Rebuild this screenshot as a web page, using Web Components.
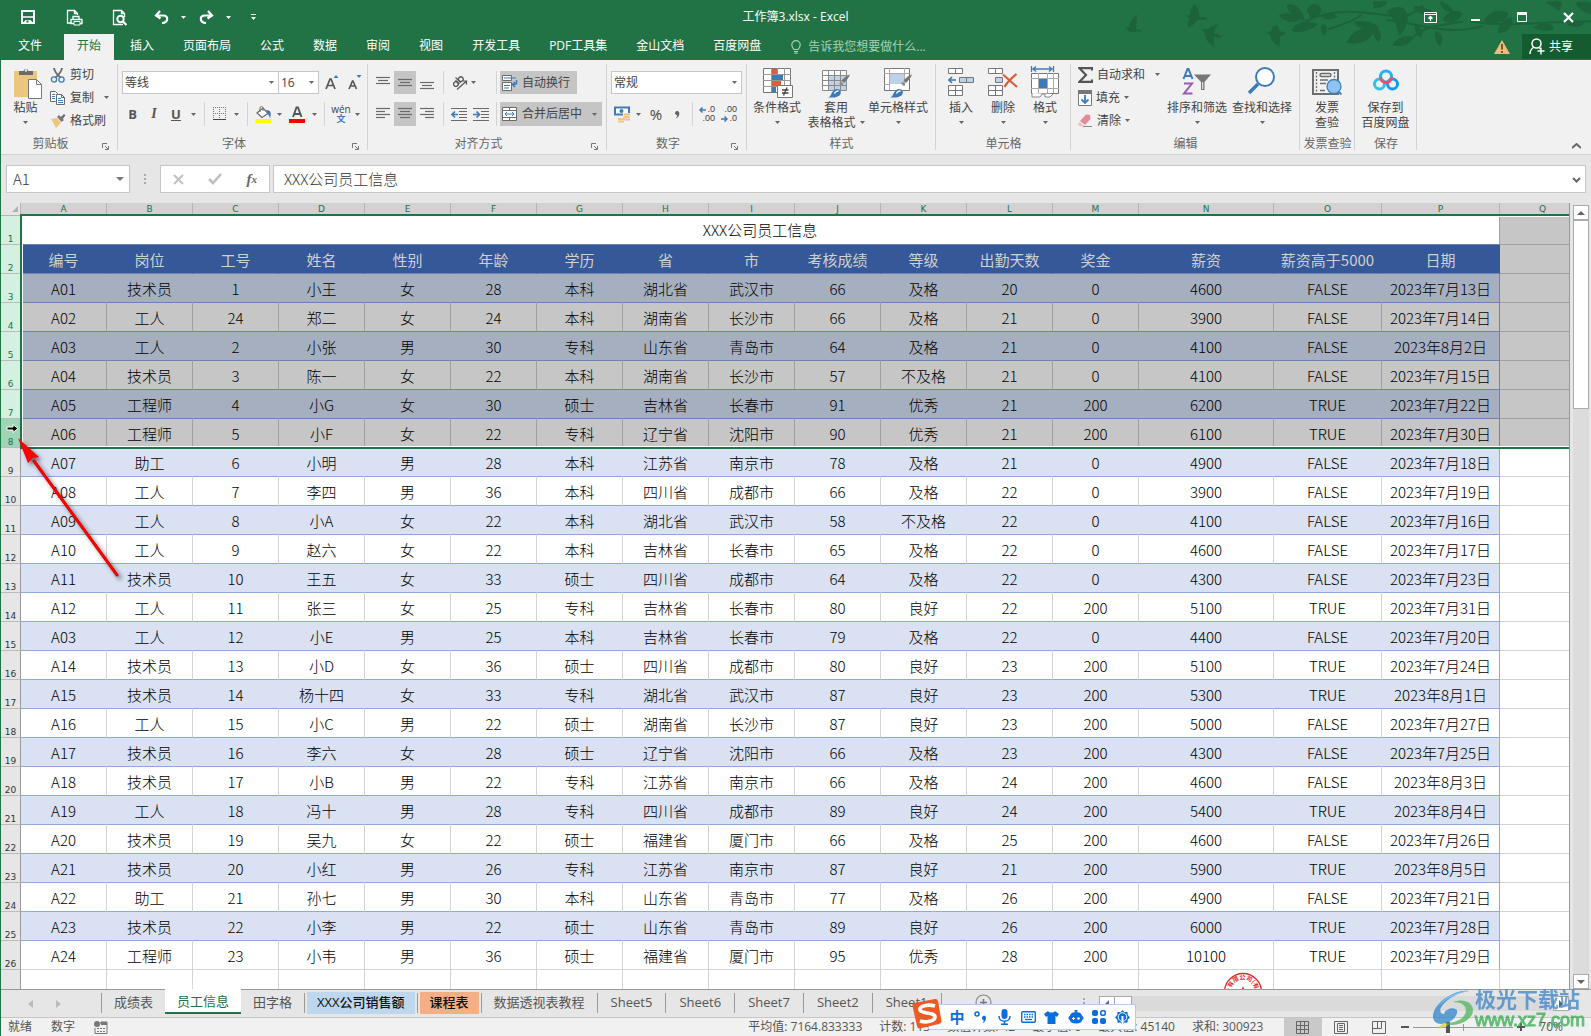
<!DOCTYPE html>
<html lang="zh-CN">
<head>
<meta charset="utf-8">
<title>工作簿3.xlsx - Excel</title>
<style>
html,body{margin:0;height:100%}
body{font:12px/16px "Open Sans","Noto Sans CJK SC",sans-serif;color:#444;overflow:hidden}
</style>
</head>
<body>
<excel-app></excel-app>
<script>
const RESET = `*{box-sizing:border-box}
button,select,input{font:inherit;color:inherit;margin:0;padding:0;border:0;background:none;border-radius:0;outline:0}
select{appearance:none}`;

/* ---------- icons ---------- */
const s = (w, h, body, extra = '') => `<svg width="${w}" height="${h}" viewBox="0 0 ${w} ${h}" fill="none" ${extra}>${body}</svg>`;
const lines = (w, rows) => s(14, 14, rows.map(([x, y, l]) => `<path d="M${x} ${y}.5h${l}"/>`).join(''), 'stroke="#6a6a6a" stroke-width="1.2"');
const brush = `<path d="M30 8.500c-1 3-3.500 6-6 8.500l-2.500-2.500c2-2.500 5-5 8.500-6z" fill="#777"/><path d="M21 15.500l2.500 2.500-2 2-2.500-2.500z" fill="#8d8d8d"/><path d="M8 31.500c2-.5 2.500-2 3.500-4 1.500-3 4-5 6.500-4.500 2.500.7 3.500 3 2.500 5-1.500 3-6.500 4-12.500 3.500z" fill="#3f7ab8"/><path d="M14.500 27.500c1-2 3-3 4-2" stroke="#fff" stroke-width="1.500"/>`;
const ICONS = {
  caret: s(5, 3, '<path d="M0 0h5L2.500 3z" fill="currentColor"/>'),
  caretl: s(8, 4, '<path d="M0 0h8L4 4z" fill="currentColor"/>'),
  save: s(16, 16, '<path d="M2 2h12v12H2z" stroke="#fff" stroke-width="2"/><path d="M3 8h10M4 13h8" stroke="#fff" stroke-width="1.500"/><path d="M5 11h6v3H5z" fill="#fff"/><path d="M6.500 11.500h2v2h-2z" fill="#217346"/>'),
  print: s(17, 17, '<path d="M6 14H1.500V1.500h7l3 3V6M8.500 1.500v3h3" stroke="#fff" stroke-width="1.300"/><path d="M7 7.500h6v3H7zM5 10.500h11v4H5z" stroke="#fff" stroke-width="1.300"/><path d="M8 12.500h6v3.500H8z" fill="#217346" stroke="#fff"/>'),
  preview: s(16, 17, '<path d="M11 15.500H1.500V1.500h8l3 3V8M9.500 1.500v3h3" stroke="#fff" stroke-width="1.300"/><circle cx="8.500" cy="10" r="3.200" stroke="#fff" stroke-width="2"/><path d="M11 12.500l3.500 3.500" stroke="#fff" stroke-width="2.200"/>'),
  undo: s(16, 15, '<path d="M6 1L2 5.500l4.500 3M3 5.500h6c6 0 5.500 7-1 7.500" stroke="#fff" stroke-width="2.200"/>'),
  redo: s(16, 15, '<path d="M10 1l4 4.500-4.500 3M13 5.500H7c-6 0-5.500 7 1 7.500" stroke="#fff" stroke-width="2.200"/>'),
  custom: s(5, 7, '<path d="M0 .5h5" stroke="#fff"/><path d="M0 3h5L2.500 6z" fill="#fff"/>'),
  ribbonopt: s(13, 11, '<path d="M.5.5h12v10H.5zM.5 2.500h12" stroke="#fff"/><path d="M6.500 9V5M4.500 6.500l2-2 2 2" stroke="#fff" stroke-width="1.300"/>'),
  min: s(10, 11, '<path d="M0 8h9" stroke="#fff" stroke-width="2"/>'),
  max: s(11, 11, '<path d="M.5.5h9v9H.5z" stroke="#fff"/><path d="M0 1.500h10" stroke="#fff" stroke-width="3"/>'),
  close: s(11, 11, '<path d="M1 1l9 9M10 1l-9 9" stroke="#fff" stroke-width="2.200"/>'),
  bulb: s(10, 14, '<path d="M3 9.500C1.500 8 .8 7 .8 4.800a4.200 4.200 0 018.400 0C9.200 7 8.500 8 7 9.500zM3 11.500h4M3.500 13.200h3" stroke="#a5d1b5" stroke-width="1.200"/>'),
  warn: s(16, 14, '<path d="M8 0l8 14H0z" fill="#e9bd7b"/><path d="M8 4v5.500M8 11v2" stroke="#5b4220" stroke-width="1.600"/>'),
  person: s(16, 17, '<circle cx="7.500" cy="5.500" r="4.500" stroke="#fff" stroke-width="1.500"/><path d="M1 16c0-3.500 1.500-5.500 4-7M10 9.500l1.500 1.500M12 9.500v7M8.500 13h7" stroke="#fff" stroke-width="1.400"/>'),
  paste: s(32, 34, '<path d="M4 5h23v26H4z" fill="#ebc67f"/><path d="M9 9V5h4.500a2.600 2.600 0 015 0H23v4z" fill="#6b6b6b"/><circle cx="16" cy="4.500" r="1.200" fill="#f1f1f1"/><path d="M18.500 13.500h8l5 5v14h-13z" fill="#fff" stroke="#777"/><path d="M26.500 13.500v5h5" stroke="#777"/>'),
  cut: s(16, 16, '<path d="M4 1c.5 4 3 6.500 6.500 9.500M12 1c-.5 4-3 6.500-6.500 9.500" stroke="#6a6a6a" stroke-width="1.900"/><circle cx="4" cy="12.500" r="2.600" stroke="#3f7ab8" stroke-width="1.300"/><circle cx="11.500" cy="12.500" r="2.600" stroke="#3f7ab8" stroke-width="1.300"/>'),
  copy: s(16, 16, '<path d="M5.500 11.500h-5v-10h5l2 2v2" fill="#fff" stroke="#6a6a6a"/><path d="M6.500 4.500h5l3 3v7h-8z" fill="#fff" stroke="#6a6a6a"/><path d="M11.500 4.500v3h3" stroke="#6a6a6a"/><path d="M8 8.500h3M8 10.500h5M8 12.500h5M2 4.500h3M2 6.500h3M2 8.500h3" stroke="#3f7ab8"/>'),
  painter: s(16, 15, '<path d="M1 6l6-1 4 5-5 5z" fill="#ebc67f"/><path d="M7 4l2-2 5 5-2.500 2z" fill="#777"/><path d="M10.500 4.500L14 1l1.500 1.500-3 3.500z" fill="#6a6a6a"/>'),
  launcher: s(7, 7, '<path d="M.5 5V.5H5M3 3l3 3M6.500 3v3.500H3" stroke="#777"/>'),
  grow: s(14, 15, '<path d="M1 14L5 4h1l4 10M2.500 10.500h6" stroke="#555" stroke-width="1.700"/><path d="M8.500 3l2.500-3 2.500 3z" fill="#3f7ab8"/>'),
  shrink: s(14, 15, '<path d="M1 14l3.500-8h.5l3.500 8M2.500 11h5" stroke="#555" stroke-width="1.600"/><path d="M8.500 0l2.500 3 2.500-3z" fill="#3f7ab8"/>'),
  borders: s(14, 14, '<path d="M.5 0v14M6.500 0v14M12.500 0v14M0 .5h13M0 6.500h13" stroke="#777" stroke-dasharray="1 1"/><path d="M0 12.500h13" stroke="#444"/>'),
  fill: s(17, 17, '<path d="M2 7l6-5 5 5.500-6 4z" fill="#fff" stroke="#6a6a6a" stroke-width="1.200"/><path d="M5 6V2c0-2 3-2 3 0v3" stroke="#6a6a6a"/><path d="M11 4c5 0 5.500 3 4 8l-2-4z" fill="#3f7ab8"/><path d="M0 13h16v4H0z" fill="#ff0"/>'),
  fontcolor: s(17, 17, '<path d="M4 11L7.500 1.500h1.500L12.500 11M5.500 8H11" stroke="#555" stroke-width="1.900"/><path d="M0 13h16v4H0z" fill="red"/>'),
  orient: s(17, 16, '<g transform="rotate(-45 7 7)" stroke="#555" stroke-width="1.300"><circle cx="4" cy="7" r="2.300"/><path d="M6.500 4v5.500M8.500 2v7.500"/><circle cx="11" cy="7" r="2.300"/></g><path d="M6 14.500l9-8M12 6h3.500v3.500" stroke="#555" stroke-width="1.200"/>'),
  top: lines(14, [[0, 1, 14], [2, 4, 10], [0, 7, 14]]),
  mid: lines(14, [[0, 3, 14], [2, 6, 10], [0, 9, 14]]),
  bot: lines(14, [[0, 6, 14], [2, 9, 10], [0, 12, 14]]),
  left: lines(14, [[0, 1, 14], [0, 4, 9], [0, 7, 14], [0, 10, 9]]),
  center: lines(14, [[0, 1, 14], [2, 4, 10], [0, 7, 14], [2, 10, 10]]),
  right: lines(14, [[0, 1, 14], [5, 4, 9], [0, 7, 14], [5, 10, 9]]),
  outdent: s(17, 13, '<path d="M0 .5h16M8 3.500h8M8 6.500h8M8 9.500h8M0 12.500h16" stroke="#6a6a6a"/><path d="M7 6.500H1M4 3.500l-3 3 3 3" stroke="#3f7ab8" stroke-width="1.700"/>'),
  indent: s(17, 13, '<path d="M0 .5h16M8 3.500h8M8 6.500h8M8 9.500h8M0 12.500h16" stroke="#6a6a6a"/><path d="M0 6.500h6M3.500 3.500l3 3-3 3" stroke="#3f7ab8" stroke-width="1.700"/>'),
  wrap: s(16, 16, '<path d="M.5.5h9v5h-9zM.5 7.500h9v8h-9z" fill="#fff" stroke="#6a6a6a"/><path d="M2 3h12M2 10.500h6M2 13h5" stroke="#3f7ab8"/><path d="M14.500 5v3c0 1-1 1.500-3 1.500M13 7l-2.500 2.500L13 12" stroke="#3f7ab8" stroke-width="1.500"/>'),
  merge: s(16, 15, '<path d="M.5.5h14v13H.5zM.5 3.500h14M.5 10.500h14M7.500.5v3M7.500 10.500v3" fill="#fff" stroke="#6a6a6a"/><path d="M3 7h9M5 5L3 7l2 2M10 5l2 2-2 2" stroke="#3f7ab8"/>'),
  money: s(17, 17, '<path d="M1 1.500h14v7H1z" fill="#fff" stroke="#3f7ab8" stroke-width="2"/><circle cx="7.500" cy="5" r="2" fill="#3f7ab8"/><path d="M9 7h7v9h-4v1H4v-5h5z" fill="#f1f1f1"/><path d="M10 8.500h6M9.500 11h6M10 13.500h6M4 13h6M4 15.500h6" stroke="#ebc67f" stroke-width="1.800"/>'),
  arrl: s(7, 6, '<path d="M7 3H1M3.500.5L1 3l2.500 2.500" stroke="#3f7ab8" stroke-width="1.500"/>'),
  arrr: s(7, 6, '<path d="M0 3h6M3.500.5L6 3 3.500 5.500" stroke="#3f7ab8" stroke-width="1.500"/>'),
  comma: s(6, 9, '<path d="M1 3a2.200 2.200 0 014-1c1 3-.5 5.500-3.500 6.500C3 7 3.300 6 3 5 2 5 1 4.500 1 3z" fill="#666"/>'),
  cond: s(32, 32, '<path d="M2.500 2.500h27v24h-27z" fill="#fff" stroke="#777"/><path d="M2 8.500h28M2 14.500h28M2 20.500h28M10.500 2v24M16.500 2v24M23.500 2v24" stroke="#999"/><path d="M11 3h5v5h-5zM11 15h9v5h-9z" fill="#d9603f"/><path d="M11 9h11v5H11zM11 21h4v5h-4z" fill="#3f7ab8"/><path d="M16.500 19.500h15v12h-15z" fill="#fff" stroke="#777"/><path d="M21 24h6.500M21 27h6.500M26 21.500l-3.500 8" stroke="#444" stroke-width="1.300"/>'),
  tablefmt: s(32, 32, '<path d="M2.500 4.500h24v20h-24z" fill="#fff"/><path d="M8 10h18v14H8z" fill="#bdd1e8"/><path d="M2.500 4.500h24v20h-24zM2 9.500h24M2 14.500h24M2 19.500h24M8.500 4v20M14.500 4v20M20.500 4v20" stroke="#8a8a8a"/>' + brush),
  cellstyle: s(32, 32, '<path d="M2.500 2.500h25v22h-25z" fill="#fff" stroke="#777"/><path d="M2 7.500h25M2 18.500h6M7.500 2v22M22.500 2v18" stroke="#aaa"/><path d="M8 8h14v10H8z" fill="#bdd1e8"/>' + brush),
  insert: s(28, 30, '<path d="M1.500 2.500h14v5h-14zM8.500 2.500v5M1.500 19.500h14v10h-14zM8.500 19.500v10M1.500 24.500h14" fill="#fff" stroke="#777"/><path d="M12.500 11.500h14v5h-14zM19.500 11.500v5" fill="#bdd1e8" stroke="#777"/><path d="M9 14H2M5 11l-3 3 3 3" stroke="#3f7ab8" stroke-width="1.700"/>'),
  del: s(32, 30, '<path d="M1.500 2.500h14v5h-14zM8.500 2.500v5M1.500 19.500h14v10h-14zM8.500 19.500v10M1.500 24.500h14" fill="#fff" stroke="#777"/><path d="M8.500 11.500h7v5h-7z" fill="#bdd1e8" stroke="#777"/><path d="M16 8.500L30 21M29.500 8C25 12 20 16 17.500 21" stroke="#dc5b3c" stroke-width="2.200"/>'),
  format: s(30, 32, '<path d="M1.500 0v6M23.500 0v6M3 3h19M6 .5L3 3l3 2.500M19 .5L22 3l-3 2.500" stroke="#3f7ab8" stroke-width="1.300"/><path d="M1.500 7.500h27v20h-27z" fill="#fff" stroke="#777"/><path d="M1 12.500h28M1 22.500h28M8.500 7v20M17.500 7v20M23.500 7v20" stroke="#aaa"/><path d="M9 13h8v9H9z" fill="#3f7ab8"/><path d="M2 27v4h8l2-3h3v3h5l3-3" fill="#fff" stroke="#888"/>'),
  sigma: s(15, 16, '<path d="M14 3.500V1.200H1.500L8 8l-6.500 6.800H14v-2.300" stroke="#555" stroke-width="2.200"/>'),
  filldown: s(14, 16, '<path d="M.5.5h13v15H.5z" fill="#fff" stroke="#777"/><path d="M0 0h14v4H0z" fill="#777"/><path d="M7 5v8M3.500 9.500L7 13l3.500-3.500" stroke="#3f7ab8" stroke-width="1.800"/>'),
  eraser: s(15, 14, '<path d="M2 7l6-6.500L12 1l.5 4L7 11z" fill="#e58a9b"/><path d="M1.500 8L6 12l-3 .5L0 11z" fill="#f3bcc6"/><path d="M5 12.500h9" stroke="#888"/>'),
  sort: s(32, 32, '<path d="M2.500 13L6.500 3h1l4 10M4 10h6.500" stroke="#3f7ab8" stroke-width="2"/><path d="M3 17.500h8L3 27.500h8.500" stroke="#9a5bb8" stroke-width="2"/><path d="M13 8.500h17l-6.500 7.500v8h-3.500v-8z" fill="#777"/><path d="M21.700 16v7" stroke="#f1f1f1"/>'),
  find: s(32, 32, '<circle cx="19" cy="11" r="9" fill="#fff" stroke="#3f7ab8" stroke-width="2"/><path d="M12 18L3 27" stroke="#3f7ab8" stroke-width="3.600"/>'),
  invoice: s(32, 32, '<path d="M2 4h25v24H2z" fill="#f1f1f1" stroke="#6e6e6e" stroke-width="2"/><path d="M5.500 6v20M23.500 6v12" stroke="#6e6e6e" stroke-dasharray="2 1.500" stroke-width="1.300"/><rect x="9" y="7.500" width="11" height="3" rx="1.500" stroke="#6e6e6e" stroke-width="1.400"/><path d="M9 14h8M9 17.500h6M9 24.500h5" stroke="#6e6e6e" stroke-width="1.300"/><circle cx="23" cy="20.500" r="7" fill="#8ec2f3" stroke="#4182b4" stroke-width="1.300"/><path d="M27.500 25.500l3 3" stroke="#4182b4" stroke-width="1.800"/>'),
  pan: s(28, 32, '<circle cx="7.500" cy="18" r="5" stroke="#2fc0f5" stroke-width="3"/><circle cx="20.500" cy="18" r="5" stroke="#0c9df2" stroke-width="3"/><circle cx="14" cy="10.500" r="5.500" stroke="#2aaefb" stroke-width="3"/><path d="M8.500 11a5.500 5.500 0 0011 0" stroke="#f0506b" stroke-width="3"/>'),
  up: s(9, 6, '<path d="M0 5l4.500-4L9 5" stroke="#666" stroke-width="2"/>'),
  down: s(9, 6, '<path d="M1 1l3.500 3.500L8 1" stroke="#666" stroke-width="2"/>'),
  cancel: s(11, 11, '<path d="M1 1l9 9M10 1l-9 9" stroke="#c0c0c0" stroke-width="2"/>'),
  ok: s(14, 12, '<path d="M1 6l4 4 8-9" stroke="#c0c0c0" stroke-width="2.600"/>'),
  stat: s(14, 13, '<circle cx="3" cy="3" r="3" fill="#777"/><path d="M7 1h6v11.500H1V7" stroke="#777"/><path d="M6 1h7v3H7z" fill="#777"/><path d="M3 7.500h9M3 10.500h9" stroke="#777" stroke-dasharray="2 1"/>'),
  vnormal: s(14, 13, '<path d="M.5.5h12v12H.5zM.5 4.500h12M.5 8.500h12M4.500.5v12M8.500.5v12" stroke="#666"/>'),
  vlayout: s(14, 13, '<path d="M.5.5h13v12H.5zM3.500 2.500h7v8h-7zM5 4.500h4M5 6.500h4M5 8.500h4" stroke="#666"/>'),
  vbreak: s(15, 13, '<path d="M.5.5h13v12H.5zM5.500.5v7M9.500.5v7M.5 7.500h9" stroke="#666"/>'),
  plus: s(17, 17, '<circle cx="8.500" cy="8.500" r="7.500" stroke="#888" stroke-width="1.200"/><path d="M8.500 5v7M5 8.500h7" stroke="#777" stroke-width="1.500"/>'),
  cursor: s(13, 9, '<path d="M1 3h6V.5L12 4.500 7 8.500V6H1z" fill="#000" stroke="#fff"/>'),
  sogou: s(32, 32, '<path d="M3 5Q1 5.500 1.500 8L6 28q.5 3 3 2.500L28 26q3-1 2.500-3L27 3q-.5-2.500-3-2z" fill="#ee5a24"/><path d="M24 8C17 6 8 8 9 12c1 4 15 2 15 7 0 4-9 6-15 4" stroke="#fff" stroke-width="3.600"/>'),
  punct: s(14, 14, '<circle cx="3" cy="4" r="2" stroke="#0a6fdc" stroke-width="1.500"/><path d="M8.500 6.500a2 2 0 013.500 1c0 3-1 4.500-3.500 5.500 1-1.500 1.300-2 1-3-1.500-.5-2-2-1-3.500z" fill="#0a6fdc"/>'),
  mic: s(13, 16, '<rect x="3.500" y="0" width="6" height="10" rx="3" fill="#0a6fdc"/><path d="M1 7c0 7 11 7 11 0M6.500 12v3M3 15.200h7" stroke="#0a6fdc" stroke-width="1.500"/>'),
  keyb: s(15, 12, '<rect x=".7" y=".7" width="13.600" height="10.600" rx="1" stroke="#0a6fdc" stroke-width="1.400"/><path d="M3 3.500h9M3 6h9" stroke="#0a6fdc" stroke-width="1.300" stroke-dasharray="1.500 1"/><path d="M4 8.500h7" stroke="#0a6fdc" stroke-width="1.300"/>'),
  shirt: s(15, 13, '<path d="M4 0c1.500 2 5.500 2 7 0l4 3-2 3-1.500-1v8h-8V5L2 6 0 3z" fill="#0a6fdc"/>'),
  robot: s(16, 14, '<path d="M8 3V0M6.500.7h3" stroke="#0a6fdc" stroke-width="1.500"/><path d="M8 2c5 0 6 3 6 4 2 0 2 4 0 4 0 2-2 3.500-6 3.500S2 12 2 10C0 10 0 6 2 6c0-1 1-4 6-4z" fill="#0a6fdc"/><path d="M4 8.500h3M5.500 7v3" stroke="#fff" stroke-width="1.200"/><circle cx="10.500" cy="8.500" r="1.300" fill="#fff"/>'),
  apps: s(14, 14, '<rect width="6" height="6" rx="2" fill="#0a6fdc"/><rect x="8.700" y=".7" width="4.600" height="4.600" rx="2" stroke="#0a6fdc" stroke-width="1.600"/><rect y="8" width="6" height="6" rx="2" fill="#0a6fdc"/><rect x="8" y="8" width="6" height="6" rx="2" fill="#0a6fdc"/>'),
  gear: s(15, 15, '<path d="M7.500 0l2 2.300 3-.5.2 3L15 7.500l-2.300 2.200-.2 3-3-.3-2 2.600-2-2.600-3 .3-.2-3L0 7.500l2.300-2.700.2-3 3 .5z" fill="#0a6fdc"/><circle cx="7.500" cy="7" r="4.300" stroke="#fff"/><path d="M7.500 6v9" stroke="#fff" stroke-width="2"/>')
};

function define(name, css, html) {
  customElements.define(name, class extends HTMLElement {
    constructor() { super(); this.attachShadow({ mode: 'open' }); }
    connectedCallback() {
      const body = typeof html === 'function' ? html(this) : html;
      this.shadowRoot.innerHTML = `<style>${RESET}${css}</style>${body}`;
    }
  });
}
const icon = n => `<x-icon name="${n}"></x-icon>`;
const caret = icon('caret');

define('x-icon', ':host{display:inline-flex;flex:none}svg{display:block}', el => ICONS[el.getAttribute('name')]);

/* ---------- title bar ---------- */
define('title-bar', `
:host{display:block;position:relative;background:#217346;color:#fff;height:60px;flex:none}
.art{position:absolute;right:0;top:0;pointer-events:none}
.row{position:relative;display:grid;grid-template-columns:1fr auto 1fr;height:34px;align-items:center}
.qat,.win{display:flex;align-items:center}
.win{justify-content:flex-end}
button{display:flex;align-items:center;justify-content:center;width:var(--w);height:32px}
.qat{padding-left:5px}
.tabs{position:relative;display:flex;height:26px;align-items:stretch}
.tabs a{color:#fff;text-decoration:none;padding:0 13px;line-height:23px;margin-right:3px}
.tabs a.file{padding:0 22px 0 18px;margin:0}
.tabs a.on{background:#f1f1f1;color:#217346}
.tell{display:flex;align-items:center;gap:7px;color:#a5d1b5;margin-left:14px}
.tell input{width:150px}.tell input::placeholder{color:#a5d1b5;opacity:1}
.sp{flex:1}
.warn{width:auto;height:auto;margin-right:12px}
.share{background:#125c30;width:69px;height:25px;gap:4px;justify-content:flex-start;padding-left:7px}
`, `
<svg class="art" width="471" height="60" viewBox="0 0 1413 180" fill="#1c633b">
<path d="M52 44c-10 4-24 18-24 40l-14-4c6 14 20 20 38 14l12 4-2-8-14-2c2-14 2-30 4-44z"/>
<path d="M224 12c-8 6-14 18-14 32l-14 4 12 6c-4 12-6 20-4 30 12-6 22-14 28-24l30 0-6-8-18 0c2-16-4-30-14-40z"/>
<path d="M298 72c-16 2-26 6-34 16l-18 0 8 12c0 18 12 30 30 40-2-12-4-20-2-30l22 4-6-10-16-4c2-12 8-20 16-28z"/>
<path d="M468 74c-10 4-14 10-14 20l-16 2 14 12c2 14 10 24 26 32 0-12 2-20 2-30l16-8-2-6-16-2c0-8-4-16-10-20z"/>
<path d="M476 46c24-14 48-4 64 18-24 6-52 0-64-18zM500 14c28-8 52 20 54 50-28-10-50-24-54-50zM514 92c14-30 50-34 80-20-20 18-50 30-80 20zM560 30c10-22 30-22 42-8 8 16-10 30-30 32zM604 74c18-4 22 16 10 34-12-8-14-22-10-34zM600 48c18-14 40-12 52 2-16 12-38 10-52-2z"/>
<path d="M556 64C640 24 720 34 800 46c60 12 70 0 110-30M724 44c-20 20-60 30-100 44M800 60c100 10 180 50 290 18M880 110c50-40 80-30 150-46M1050 64c100 20 200 0 363 0" fill="none" stroke="#1c633b" stroke-width="6"/>
<path d="M680 128c16-38 50-50 86-40-14 34-44 50-86 40zM700 66c30-8 66 0 78 20-34 8-66 0-78-20zM762 82c24 8 26 28 14 44-16-12-20-28-14-44zM760 4h44c-8 18-36 26-44 18zM800 36c30-28 60-14 62 10 6 24-12 48-22 62-14-26-6-44-40-72z"/>
<path d="M816 136c14-24 42-34 66-24-12 22-36 32-66 24zM886 74c18 6 24 20 18 38-16-8-22-20-18-38zM948 92c24 12 24 32 12 46-14-12-18-32-12-46zM968 60c14-28 40-32 58-22 0 18-30 40-58 22zM940 34c-20-10-40-18-60-14 10 22 36 28 60 14zM960 4c20 4 40 20 40 34-24-2-40-16-40-34z"/>
<path d="M1090 62c20-28 50-40 74-22 0 28-46 36-74 22zM1134 100c0-24 10-40 40-48 10 20-8 48-40 48zM1240 84c14-18 50-16 60-6 8 12-12 24-60 6zM1276 6l40 26c14-20 10-28-2-30zM1366 8c14-6 34-4 47 0v34c-24-6-40-18-47-34zM1340 74c16 8 44 10 52-4-12-10-36-12-52 4z"/>
</svg>
<div class="row">
 <div class="qat">
  <button style="--w:46px" aria-label="保存">${icon('save')}</button><button style="--w:46px" aria-label="打印">${icon('print')}</button><button style="--w:46px" aria-label="预览">${icon('preview')}</button>
  <button style="--w:38px" aria-label="撤销">${icon('undo')}</button><button style="--w:4px" aria-label="撤销列表">${caret}</button>
  <button style="--w:42px" aria-label="恢复">${icon('redo')}</button><button style="--w:2px" aria-label="恢复列表">${caret}</button><button style="--w:48px" aria-label="自定义">${icon('custom')}</button>
 </div>
 <div>工作簿3.xlsx - Excel</div>
 <div class="win"><button style="--w:46px" aria-label="功能区">${icon('ribbonopt')}</button><button style="--w:46px" aria-label="最小化">${icon('min')}</button><button style="--w:46px" aria-label="最大化">${icon('max')}</button><button style="--w:46px" aria-label="关闭">${icon('close')}</button></div>
</div>
<div class="tabs">
 <a class="file" href="#">文件</a><a class="on" href="#">开始</a>${['插入', '页面布局', '公式', '数据', '审阅', '视图', '开发工具', 'PDF工具集', '金山文档', '百度网盘'].map(t => `<a href="#">${t}</a>`).join('')}
 <label class="tell">${icon('bulb')}<input placeholder="告诉我您想要做什么..."></label>
 <span class="sp"></span>
 <button class="warn" aria-label="警告">${icon('warn')}</button><button class="share">${icon('person')}<span>共享</span></button>
</div>`);

/* ---------- ribbon ---------- */
define('ribbon-group', `
:host{display:flex;flex-direction:column;flex:none;width:var(--w);height:94px;position:relative}
:host::after{content:"";position:absolute;right:0;top:4px;bottom:4px;width:1px;background:#d2d2d2}
.body{height:76px;display:flex}
.foot{display:flex;height:16px;line-height:16px;color:#666;white-space:nowrap}
.foot span{flex:1;display:flex;justify-content:center;min-width:0}
button{display:flex;align-items:flex-end;justify-content:flex-start;height:14px;width:18px;padding-left:2px}
`, el => `<div class="body"><slot></slot></div><div class="foot"><span>${el.getAttribute('label')}</span>${el.hasAttribute('launcher') ? `<button style="width:12px;padding:0" aria-label="对话框">${icon('launcher')}</button>` : ''}</div>`.replace('width:12px;padding:0', ''));

define('big-button', `
:host{display:block;width:var(--w);flex:none}
button{display:flex;flex-direction:column;align-items:center;width:100%;height:76px;padding-top:6px;white-space:nowrap}
.i{height:34px;display:flex;align-items:flex-start;justify-content:center}
.t{height:15px;line-height:15px}
.c{height:14px;display:flex;align-items:center;color:#666}
.l{display:flex;align-items:center;gap:4px;height:15px}.l x-icon{color:#666}
`, el => {
  const [a, b] = el.getAttribute('label').split('|'), arrow = el.hasAttribute('arrow');
  return `<button><span class="i">${icon(el.getAttribute('icon'))}</span><span class="t">${a}</span>${b ? `<span class="l">${b}${arrow ? caret : ''}</span>` : arrow ? `<span class="c">${caret}</span>` : ''}</button>`;
});

const cell = (w, n, cls = '') => `<button class="${cls}" style="width:${w}px" aria-label="${n}">${icon(n)}</button>`;
const sep = w => `<i style="width:${w}px"></i>`;
define('ribbon-bar', `
:host{display:flex;flex:none;height:95px;background:#f1f1f1;border-bottom:1px solid #d2d2d2}
button{display:inline-flex;align-items:center;justify-content:center;flex:none;height:100%;white-space:nowrap}
x-icon[name=caret]{color:#666}
.stack{display:flex;flex-direction:column;padding-top:3px}
.stack button{height:23px;gap:4px;justify-content:flex-start}
.far{margin-left:6px;display:flex}
.rows{display:flex;flex-direction:column;gap:8px;padding:11px 0 0 4px}
.row{display:flex;height:24px}
.row:first-child{height:23px}
.row i{display:flex;justify-content:center}.row i::before{content:"";width:1px;background:#d2d2d2}
.on{background:#c5c5c5}
.dd{display:grid;background:#fff;border:1px solid #c6c6c6;width:var(--w)}
.dd+.dd{border-left:0}
.dd select,.dd x-icon{grid-area:1/1}
.dd select{padding-left:2px;color:#444;width:100%}
.dd x-icon{justify-self:end;align-self:center;margin-right:4px;pointer-events:none}
.wide{gap:4px;justify-content:flex-start;padding-left:2px}
b,em,u{font:bold 13px "Open Sans";color:#555}em{font:italic bold 14px "Liberation Serif"}
.wen{flex-direction:column;font-size:10px;line-height:10px}.wen span:last-child{color:#3f7ab8;font:bold 9px/10px "Noto Sans CJK SC"}
.pct{font-size:15px}
.dec{flex-direction:column;align-items:flex-end;padding-right:4px;font:9px/9px "Liberation Sans"}.dec span{display:flex;align-items:center;gap:1px}
.end{flex:1;display:flex;justify-content:flex-end;align-items:flex-end;padding:0 10px 4px}.end button{height:8px}
`, `
<ribbon-group label="剪贴板" launcher style="--w:117px">
 <big-button icon="paste" label="粘贴" arrow style="--w:49px"></big-button>
 <div class="stack"><button>${icon('cut')}剪切</button><button>${icon('copy')}复制<span class="far">${caret}</span></button><button>${icon('painter')}格式刷</button></div>
</ribbon-group>
<ribbon-group label="字体" launcher style="--w:250px"><div class="rows">
 <div class="row"><span class="dd" style="--w:157px"><select aria-label="字体"><option>等线</option></select>${caret}</span><span class="dd" style="--w:40px"><select aria-label="字号"><option>16</option></select>${caret}</span>${cell(25, 'grow')}${cell(22, 'shrink')}</div>
 <div class="row"><button style="width:21px"><b>B</b></button><button style="width:22px"><em>I</em></button><button style="width:22px"><u>U</u></button>${cell(13, 'caret')}${sep(8)}${cell(23, 'borders')}${cell(11, 'caret')}${sep(10)}${cell(22, 'fill')}${cell(10, 'caret')}${cell(26, 'fontcolor')}${cell(8, 'caret')}${sep(12)}<button class="wen" style="width:22px"><span>wén</span><span>文</span></button>${cell(10, 'caret')}</div>
</div></ribbon-group>
<ribbon-group label="对齐方式" launcher style="--w:239px"><div class="rows">
 <div class="row">${cell(22, 'top')}${cell(22, 'mid', 'on')}${cell(22, 'bot')}${sep(10)}${cell(22, 'orient')}${cell(6, 'caret')}<span style="width:16px"></span>${sep(8)}<button class="on wide" style="width:77px">${icon('wrap')}自动换行</button></div>
 <div class="row">${cell(22, 'left')}${cell(22, 'center', 'on')}${cell(22, 'right')}${sep(10)}${cell(22, 'outdent')}${cell(22, 'indent')}${sep(8)}<button class="on wide" style="width:102px">${icon('merge')}合并后居中<span class="far">${caret}</span></button></div>
</div></ribbon-group>
<ribbon-group label="数字" launcher style="--w:140px"><div class="rows">
 <div class="row"><span class="dd" style="--w:131px"><select aria-label="数字格式"><option>常规</option></select>${caret}</span></div>
 <div class="row">${cell(22, 'money')}${cell(10, 'caret')}<button class="pct" style="width:26px">%</button>${cell(16, 'comma')}${sep(14)}<button class="dec" style="width:20px"><span>${icon('arrl')}.0</span><span>.00</span></button><button class="dec" style="width:22px"><span>.00</span><span>${icon('arrr')}.0</span></button></div>
</div></ribbon-group>
<ribbon-group label="样式" style="--w:189px">
 <big-button icon="cond" label="条件格式" arrow style="--w:60px"></big-button><big-button icon="tablefmt" label="套用|表格格式" arrow style="--w:58px"></big-button><big-button icon="cellstyle" label="单元格样式" arrow style="--w:66px"></big-button>
</ribbon-group>
<ribbon-group label="单元格" style="--w:135px"><span style="width:4px"></span>
 <big-button icon="insert" label="插入" arrow style="--w:42px"></big-button><big-button icon="del" label="删除" arrow style="--w:42px"></big-button><big-button icon="format" label="格式" arrow style="--w:42px"></big-button>
</ribbon-group>
<ribbon-group label="编辑" style="--w:229px"><span style="width:7px"></span>
 <div class="stack"><button>${icon('sigma')}自动求和<span class="far">${caret}</span></button><button>${icon('filldown')}填充${caret}</button><button>${icon('eraser')}清除${caret}</button></div><span style="flex:1"></span>
 <big-button icon="sort" label="排序和筛选" arrow style="--w:64px"></big-button><big-button icon="find" label="查找和选择" arrow style="--w:66px"></big-button><span style="width:5px"></span>
</ribbon-group>
<ribbon-group label="发票查验" style="--w:55px"><big-button icon="invoice" label="发票|查验" style="--w:54px"></big-button></ribbon-group>
<ribbon-group label="保存" style="--w:62px"><big-button icon="pan" label="保存到|百度网盘" style="--w:61px"></big-button></ribbon-group>
<div class="end"><button aria-label="折叠功能区">${icon('up')}</button></div>`);

/* ---------- formula bar ---------- */
define('formula-bar', `
:host{display:flex;flex:none;height:48px;background:#e6e6e6;padding:10px 5px}
.box{display:flex;align-items:center;background:#fff;border:1px solid #c6c6c6;height:28px}
input{font:300 15px/20px "Noto Sans CJK SC",sans-serif;color:#333;min-width:0;flex:1}
.name{width:124px;padding:0 5px 0 6px}.name x-icon{color:#777}
.dots{width:30px;display:flex;justify-content:center;align-items:center}
.dots::before{content:"";width:2px;height:10px;background:repeating-linear-gradient(#aaa 0 2px,transparent 2px 4px)}
.fx{width:110px;justify-content:space-between;padding:0 12px;margin-right:3px}
.fx button{display:flex}.fx .f{font:italic bold 15px/20px "Liberation Serif";color:#666}.f small{font-size:11px}
.in{flex:1;padding:0 4px 0 10px}
`, `<div class="box name"><input aria-label="名称框" value="A1">${icon('caretl')}</div><span class="dots"></span>
<div class="box fx"><button aria-label="取消">${icon('cancel')}</button><button aria-label="输入">${icon('ok')}</button><button class="f">f<small>x</small></button></div>
<div class="box in"><input aria-label="编辑栏" value="XXX公司员工信息"><button aria-label="展开">${icon('down')}</button></div>`);

/* ---------- worksheet ---------- */
const HEAD = ['编号', '岗位', '工号', '姓名', '性别', '年龄', '学历', '省', '市', '考核成绩', '等级', '出勤天数', '奖金', '薪资', '薪资高于5000', '日期'];
const DATA = `A01,技术员,1,小王,女,28,本科,湖北省,武汉市,66,及格,20,0,4600,FALSE,7月13日
A02,工人,24,郑二,女,24,本科,湖南省,长沙市,66,及格,21,0,3900,FALSE,7月14日
A03,工人,2,小张,男,30,专科,山东省,青岛市,64,及格,21,0,4100,FALSE,8月2日
A04,技术员,3,陈一,女,22,本科,湖南省,长沙市,57,不及格,21,0,4100,FALSE,7月15日
A05,工程师,4,小G,女,30,硕士,吉林省,长春市,91,优秀,21,200,6200,TRUE,7月22日
A06,工程师,5,小F,女,22,专科,辽宁省,沈阳市,90,优秀,21,200,6100,TRUE,7月30日
A07,助工,6,小明,男,28,本科,江苏省,南京市,78,及格,21,0,4900,FALSE,7月18日
A08,工人,7,李四,男,36,本科,四川省,成都市,66,及格,22,0,3900,FALSE,7月19日
A09,工人,8,小A,女,22,本科,湖北省,武汉市,58,不及格,22,0,4100,FALSE,7月16日
A10,工人,9,赵六,女,22,本科,吉林省,长春市,65,及格,22,0,4600,FALSE,7月17日
A11,技术员,10,王五,女,33,硕士,四川省,成都市,64,及格,22,0,4300,FALSE,7月23日
A12,工人,11,张三,女,25,专科,吉林省,长春市,80,良好,22,200,5100,TRUE,7月31日
A03,工人,12,小E,男,25,本科,吉林省,长春市,79,及格,22,0,4400,FALSE,7月20日
A14,技术员,13,小D,女,36,硕士,四川省,成都市,80,良好,23,200,5100,TRUE,7月24日
A15,技术员,14,杨十四,女,33,专科,湖北省,武汉市,87,良好,23,200,5300,TRUE,8月1日
A16,工人,15,小C,男,22,硕士,湖南省,长沙市,87,良好,23,200,5000,FALSE,7月27日
A17,技术员,16,李六,女,28,硕士,辽宁省,沈阳市,66,及格,23,200,4300,FALSE,7月25日
A18,技术员,17,小B,男,22,专科,江苏省,南京市,66,及格,24,200,4600,FALSE,8月3日
A19,工人,18,冯十,男,28,专科,四川省,成都市,89,良好,24,200,5400,TRUE,8月4日
A20,技术员,19,吴九,女,22,硕士,福建省,厦门市,66,及格,25,200,4600,FALSE,7月26日
A21,技术员,20,小红,男,26,专科,江苏省,南京市,87,良好,21,200,5900,TRUE,8月5日
A22,助工,21,孙七,男,30,本科,山东省,青岛市,77,及格,26,200,4900,FALSE,7月21日
A23,技术员,22,小李,男,22,硕士,山东省,青岛市,89,良好,26,200,6000,TRUE,7月28日
A24,工程师,23,小韦,男,36,硕士,福建省,厦门市,95,优秀,28,200,10100,TRUE,7月29日`.split('\n').map(r => { const c = r.split(','); c[15] = '2023年' + c[15]; return c; });

define('sheet-grid', `
:host{display:block;position:relative;overflow:hidden;flex:1;min-width:0;background:#fff;border-right:1px solid #999}
table{table-layout:fixed;border-collapse:separate;border-spacing:0;width:1585px;text-align:center;font:300 15px/20px "Noto Sans CJK SC",sans-serif;color:#000}
td,th{padding:0;overflow:hidden;white-space:nowrap;border-right:1px solid #d4d4d4;border-bottom:1px solid #d4d4d4}
td{padding-top:2px}td.title{padding:0}
tbody tr{height:29px}
thead tr{height:13px}
thead th{background:#d2d2d2;border-color:#b4b4b4;font:9px/12px "DejaVu Sans",sans-serif;color:#217346}
thead th.corner{background:#e6e6e6}
.corner svg{display:block;margin-left:11px}
tbody th{background:#e6e6e6;border-color:#bcbcbc;border-right-color:#999;font:9px/9px "DejaVu Sans",sans-serif;color:#333;vertical-align:bottom}
.sel th{background:#d3f0e0;color:#217346}
.sel.cur th{background:#9fd5b7}
.band td:not(.q){background:#d9e1f2;border-color:#8ea9db;border-right-color:transparent}
.plain td:not(.q){border-bottom-color:#8ea9db}
.plain.last td:not(.q){border-bottom-color:#d4d4d4}
.sel td{background:#c6c6c6;border-color:#a0a0a0}
.sel.band td:not(.q){background:#a6afbf;border-bottom-color:#6b83b3}
.sel.plain td:not(.q){border-bottom-color:#6b83b3}
.sel.head td:not(.q){background:#355899;color:#d0d0d0;font-weight:400;border-color:#6b83b3;border-right-color:transparent}
.sel td.title{background:#fff;border-bottom-color:#6b83b3}
.band td.p,.plain td.p{border-right-color:#8ea9db!important}
.sel.band td.p,.sel.plain td.p{border-right-color:#6b83b3!important}
.box{position:absolute;left:19px;top:11px;right:-9px;height:235px;border:2px solid #217346;box-shadow:inset 0 0 0 1px #fff;pointer-events:none}
.seal{position:absolute;left:1221px;top:768px}
.ptr{position:absolute;left:5px;top:218px}
`, () => {
  const letters = [...'ABCDEFGHIJKLMNOPQ'];
  const widths = [20, ...Array(13).fill(86), 135, 108, 118, 86];
  const rows = DATA.map((r, i) => {
    const n = i + 3;
    return `<tr class="${n % 2 ? 'band' : 'plain'}${n < 9 ? ' sel' : ''}${n === 8 ? ' cur' : ''}${n === 26 ? ' last' : ''}"><th>${n}</th>${r.map((c, k) => `<td${k === 15 ? ' class="p"' : ''}>${c}</td>`).join('')}<td class="q"></td></tr>`;
  }).join('');
  return `<table><colgroup>${widths.map(w => `<col style="width:${w}px">`).join('')}</colgroup>
<thead><tr><th class="corner"><svg width="6" height="6"><path d="M6 0v6H0z" fill="#b0b0b0"/></svg></th>${letters.map(l => `<th>${l}</th>`).join('')}</tr></thead>
<tbody><tr class="sel"><th>1</th><td class="title" colspan="16">XXX公司员工信息</td><td class="q"></td></tr>
<tr class="sel head"><th>2</th>${HEAD.map(h => `<td>${h}</td>`).join('')}<td class="q"></td></tr>${rows}
<tr><th></th>${letters.map(() => '<td></td>').join('')}</tr></tbody></table>
<div class="box"></div><span class="ptr">${icon('cursor')}</span>
<svg class="seal" width="42" height="42" viewBox="-21 -21 42 42" fill="none"><circle r="18.500" stroke="#e8262b" stroke-width="1.300"/><path id="arc" d="M-10.500 6A12.200 12.200 0 1 1 10.500 6"/><text font-size="6" font-weight="700" fill="#e8262b" font-family="Noto Sans CJK SC"><textPath href="#arc" startOffset="4">份有限公司(有限</textPath></text><path d="M0-6l1.500 4h4.500L2.500 1l1.500 5L0 3l-4 3 1.500-5L-6-2h4.500z" fill="#e8262b"/></svg>`;
});

define('v-scroll', `
:host{display:flex;flex-direction:column;flex:none;width:21px;padding:2px 2px 0 3px;background:#e6e6e6}
button{height:15px;background:#fff;border:1px solid #ababab;display:flex;align-items:center;justify-content:center;color:#666;flex:none}
.up x-icon{transform:rotate(180deg)}
.track{flex:1;background:#dcdcdc}
.thumb{height:25%;background:#fff;border:1px solid #ababab;width:100%}
`, `<button class="up" aria-label="向上">${icon('caretl')}</button><div class="track"><div class="thumb"></div></div><button aria-label="向下">${icon('caretl')}</button>`);

/* ---------- sheet tabs ---------- */
define('sheet-tabs', `
:host{display:flex;flex:none;height:29px;background:#e6e6e6;border-top:1px solid #999;border-bottom:1px solid #c6c6c6;font-size:13px;line-height:20px;color:#555;padding-right:22px}
nav{display:flex}
.nav{width:100px;display:flex;justify-content:center;gap:23px;align-items:center;padding-right:14px}
.nav svg{display:block}
button{white-space:nowrap;height:23px;padding:0 12px}
i{width:1px;background:#999;margin:3px 0 4px}
.on{background:#fff;color:#217346;border-bottom:2px solid #217346;margin-top:-1px;height:25px;width:76px}
.c{margin:2px 2px 0;height:22px;padding:0 10px 3px;color:#111;font-weight:500}
.sh{padding:0 13px}
.add{padding:0 0 0 33px;display:flex;align-items:center;height:24px}
.d{width:2px;height:10px;margin:8px 14px 0 auto;background:repeating-linear-gradient(#aaa 0 2px,transparent 2px 4px)}
.scroll{display:flex;width:30%;height:15px;margin-top:6px;background:#dadada}
.scroll button{height:15px;width:16px;padding:0;background:#fff;border:1px solid #ababab;display:flex;align-items:center;justify-content:center;color:#666}
.scroll button:first-child x-icon{transform:rotate(90deg)}.scroll button:last-child x-icon{transform:rotate(-90deg)}
.scroll .t{width:17px;background:#fff;border:1px solid #ababab;border-left:0}.scroll .g{flex:1}
`, `<span class="nav"><svg width="5" height="8"><path d="M5 0v8L0 4z" fill="#bbb"/></svg><svg width="5" height="8"><path d="M0 0v8l5-4z" fill="#bbb"/></svg></span><nav><i></i>
<button>成绩表</button><button class="on">员工信息</button><button>田字格</button><i></i><button class="c" style="background:#bdd7ee">XXX公司销售额</button><i></i><button class="c" style="background:#f4b084">课程表</button><i></i><button>数据透视表教程</button><i></i>${['Sheet5', 'Sheet6', 'Sheet7', 'Sheet2', 'Sheet1'].map(t => `<button class="sh">${t}</button><i></i>`).join('')}</nav><button class="add" aria-label="新工作表">${icon('plus')}</button><span class="d"></span>
<div class="scroll"><button aria-label="向左">${icon('caretl')}</button><div class="t"></div><div class="g"></div><button aria-label="向右">${icon('caretl')}</button></div>`);

/* ---------- status bar ---------- */
define('status-bar', `
:host{display:flex;flex:none;height:18px;background:#f1f1f1;align-items:center;padding:0 28px 0 7px;color:#555;white-space:nowrap}
.l{display:flex;gap:19px;align-items:center;flex:1}
.s{display:flex;gap:17px;padding-right:21px}
.v{display:flex}.v button{width:38px;height:18px;display:flex;align-items:center;justify-content:center}.v .on{background:#c9c9c9}
.z{display:flex;align-items:center;gap:4px;padding:0 14px 0 3px}.z button{width:8px;display:flex;height:16px;align-items:center;justify-content:center}
.z button::before{content:"";width:8px;height:8px;background:linear-gradient(#555,#555) 0 3px/8px 2px no-repeat}
.z .p::before{background:linear-gradient(#555,#555) 0 3px/8px 2px no-repeat,linear-gradient(#555,#555) 3px 0/2px 8px no-repeat}
input{appearance:none;width:100px;height:13px;background:linear-gradient(#999,#999) 50% 50%/1px 7px no-repeat,linear-gradient(#999,#999) 0 50%/100% 1px no-repeat}
input::-webkit-slider-thumb{appearance:none;width:4px;height:11px;background:#555}
`, `<div class="l"><span>就绪</span><span>数字</span>${icon('stat')}</div>
<div class="s"><span>平均值: 7164.833333</span><span>计数: 113</span><span>数值计数: 42</span><span>最小值: 0</span><span>最大值: 45140</span><span>求和: 300923</span></div>
<div class="v"><button class="on" aria-label="普通">${icon('vnormal')}</button><button aria-label="页面布局">${icon('vlayout')}</button><button aria-label="分页预览">${icon('vbreak')}</button></div>
<div class="z"><button aria-label="缩小"></button><input type="range" aria-label="缩放" min="0" max="100" value="34"><button class="p" aria-label="放大"></button></div><span>70%</span>`);

/* ---------- floating pieces ---------- */
define('ime-bar', `
:host{position:absolute;left:910px;bottom:6px;display:flex;align-items:flex-end}
.b{display:flex;align-items:center;justify-content:space-between;width:208px;height:26px;margin-left:-15px;background:#fff;border:1px solid #b4cdea;border-radius:2px;padding:0 3px 0 19px;font:bold 15px/22px "Noto Sans CJK SC";color:#0a6fdc}
.s{position:relative;display:flex}
button{display:flex;justify-content:center;width:18px}
`, `<span class="s">${icon('sogou')}</span><div class="b"><button>中</button>${['punct', 'mic', 'keyb', 'shirt', 'robot', 'apps', 'gear'].map(n => `<button aria-label="${n}">${icon(n)}</button>`).join('')}</div>`);

define('site-mark', `
:host{position:absolute;right:6px;bottom:4px;display:flex;opacity:.75;pointer-events:none}
div{display:flex;flex-direction:column}
b{font:bold 21px/24px "Noto Sans CJK SC";color:#3c84c8}
span{font:18px/20px "Liberation Sans";color:#33ab4f;-webkit-text-stroke:1px #33ab4f}
svg{display:block}
`, `<svg width="44" height="46" viewBox="0 0 44 46"><path d="M38 5C24 3 4 16 2 29c-1 9 8 11 16 7 6-3 9-8 8-12-4-4-12-1-13 4-4 0-5-4-2-8C17 12 28 6 38 5z" fill="#2f86cf"/><path d="M6 22c6-10 18-17 32-17-14 3-26 9-32 17z" fill="#5db4ee"/><path d="M22 16c10-4 20 0 20 8 0 10-14 16-25 15-4 2-8 4-10 3 2-2 4-4 7-5 12 0 20-5 21-12 0-6-5-9-13-9z" fill="#4fb65a"/><path d="M17 39c-4 2-8 4-10 3 2-2 4-4 7-5z" fill="#e8d23c"/></svg><div><b>极光下载站</b><span>www.xz7.com</span></div>`);

define('red-arrow', `:host{position:absolute;left:11px;top:432px;pointer-events:none}svg{display:block;filter:drop-shadow(3px 3px 2px rgba(0,0,0,.5))}`,
  `<svg width="116" height="156" viewBox="0 0 116 156"><path d="M22 29L105 143" stroke="#d00" stroke-width="3" stroke-linecap="round"/><path d="M6 6l21 19-6 1-5 5z" fill="#f00"/><path d="M22 29L105 143" stroke="#f00" stroke-width="2"/></svg>`);

define('excel-app', `
:host{display:flex;flex-direction:column;height:100vh;position:relative;background:#e6e6e6;border-left:1px solid #217346;overflow:hidden}
title-bar{margin-left:-1px}
.main{display:flex;flex:1;min-height:0}
`, `<title-bar></title-bar><ribbon-bar></ribbon-bar><formula-bar></formula-bar>
<div class="main"><sheet-grid></sheet-grid><v-scroll></v-scroll></div>
<sheet-tabs></sheet-tabs><status-bar></status-bar><red-arrow></red-arrow><ime-bar></ime-bar><site-mark></site-mark>`);
</script>
</body>
</html>
